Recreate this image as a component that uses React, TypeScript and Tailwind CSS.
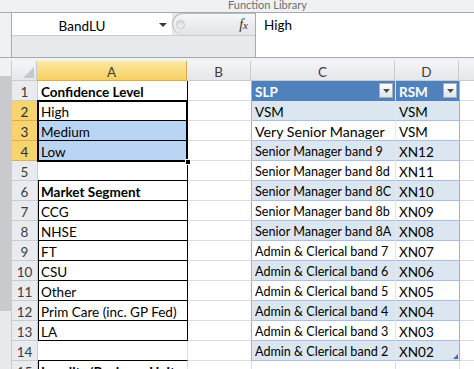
import React from 'react';

type Row = {
  n: number;
  a: string;
  aBold?: boolean;
  c?: string;
  d?: string;
};

const rows: Row[] = [
  { n: 1, a: 'Confidence Level', aBold: true, c: 'SLP', d: 'RSM' },
  { n: 2, a: 'High', c: 'VSM', d: 'VSM' },
  { n: 3, a: 'Medium', c: 'Very Senior Manager', d: 'VSM' },
  { n: 4, a: 'Low', c: 'Senior Manager band 9', d: 'XN12' },
  { n: 5, a: '', c: 'Senior Manager band 8d', d: 'XN11' },
  { n: 6, a: 'Market Segment', aBold: true, c: 'Senior Manager band 8C', d: 'XN10' },
  { n: 7, a: 'CCG', c: 'Senior Manager band 8b', d: 'XN09' },
  { n: 8, a: 'NHSE', c: 'Senior Manager band 8A', d: 'XN08' },
  { n: 9, a: 'FT', c: 'Admin & Clerical band 7', d: 'XN07' },
  { n: 10, a: 'CSU', c: 'Admin & Clerical band 6', d: 'XN06' },
  { n: 11, a: 'Other', c: 'Admin & Clerical band 5', d: 'XN05' },
  { n: 12, a: 'Prim Care (inc. GP Fed)', c: 'Admin & Clerical band 4', d: 'XN04' },
  { n: 13, a: 'LA', c: 'Admin & Clerical band 3', d: 'XN03' },
  { n: 14, a: '', c: 'Admin & Clerical band 2', d: 'XN02' },
  { n: 15, a: 'Locality/Business Unit', aBold: true },
];

const FilterButton = () => (
  <div className="w-[14px] h-[15px] mt-[2px] mr-[2px] shrink-0 border border-[#a9b0b9] bg-linear-to-b from-[#ffffff] to-[#dfe3e8] flex items-center justify-center">
    <svg width="7" height="4" viewBox="0 0 7 4">
      <polygon points="0,0 7,0 3.5,4" fill="#4d4d4d" />
    </svg>
  </div>
);

function SheetRow({ r }: { r: Row }) {
  const sel = r.n >= 2 && r.n <= 4;
  const inTable = r.n <= 14;
  const head = r.n === 1;
  const band = r.n >= 2 && r.n <= 14 && r.n % 2 === 0;
  const blackRight = r.n <= 13;
  const blackBottom = r.n <= 14;
  const blackLeft = (r.n >= 2 && r.n <= 4) || (r.n >= 6 && r.n <= 13) || r.n === 15;

  // column C mixes font sizes in the original sheet
  let cText = 'pt-[4px] leading-[14px] text-[12.6px]';
  if (head || r.n === 2) cText = 'pt-[4px] leading-[14px] text-[13.5px]';
  if (r.n === 3) cText = 'pt-[3px] leading-[15px] text-[14.2px]';

  return (
    <div className="flex h-[20px] shrink-0">
      <div
        className={`w-[26px] shrink-0 border-r border-b text-center pt-[4px] leading-[14px] text-[13.5px] ${
          sel ? 'bg-[#f8d46f] border-[#dcae4c] text-[#2e2e2e]' : 'bg-[#e9ebee] border-[#c8ccd1] text-[#3d3d3d]'
        }`}
      >
        {r.n}
      </div>
      <div
        className={`w-[150px] shrink-0 border-r border-b px-[3px] pt-[4px] leading-[14px] text-[13.5px] whitespace-nowrap overflow-hidden ${
          blackRight ? 'border-r-black' : 'border-r-[#dadcdd]'
        } ${blackBottom ? 'border-b-black' : 'border-b-[#dadcdd]'} ${blackLeft ? 'shadow-[inset_1px_0_0_#000]' : ''} ${
          sel && r.n > 2 ? 'bg-[#b9d5f3]' : 'bg-white'
        } ${r.aBold ? 'font-bold' : ''}`}
      >
        {r.a}
      </div>
      <div
        className={`w-[64px] shrink-0 border-r border-b border-b-[#dadcdd] bg-white ${
          inTable ? 'border-r-[#95b3d7]' : 'border-r-[#dadcdd]'
        }`}
      />
      {inTable ? (
        <>
          <div
            className={`w-[144px] shrink-0 border-r flex whitespace-nowrap overflow-hidden ${
              head
                ? 'bg-[#4f81bd] text-white font-bold border-r-[#dfe6ef] border-b border-b-[#4f81bd]'
                : `border-r-[#e3e9f1] border-b border-b-[#a9c0de] ${band ? 'bg-[#dce6f1]' : 'bg-white'}`
            }`}
          >
            <div className={`flex-1 pl-[3px] ${cText}`}>{r.c}</div>
            {head && <FilterButton />}
          </div>
          <div
            className={`w-[64px] shrink-0 border-r border-r-[#95b3d7] flex relative whitespace-nowrap overflow-hidden ${
              head
                ? 'bg-[#4f81bd] text-white font-bold border-b border-b-[#4f81bd]'
                : `border-b border-b-[#a9c0de] ${band ? 'bg-[#dce6f1]' : 'bg-white'}`
            }`}
          >
            <div className="flex-1 pl-[3px] pt-[4px] leading-[14px] text-[13.5px]">{r.d}</div>
            {head && <FilterButton />}
            {r.n === 14 && (
              <svg className="absolute right-[1px] bottom-[1px]" width="5" height="5" viewBox="0 0 5 5">
                <polygon points="5,0 5,5 0,5" fill="#3c6db0" />
              </svg>
            )}
          </div>
        </>
      ) : (
        <>
          <div className="w-[144px] shrink-0 border-r border-b border-[#dadcdd] bg-white" />
          <div className="w-[64px] shrink-0 border-r border-b border-[#dadcdd] bg-white" />
        </>
      )}
      <div className="flex-1 border-b border-[#dadcdd] bg-white" />
    </div>
  );
}

export default function App() {
  return (
    <div className="w-[474px] h-[369px] overflow-hidden bg-[#f0f1f3] text-black font-['Lato','Liberation_Sans',sans-serif] flex flex-col">
      {/* ribbon edge */}
      <div className="h-[13px] shrink-0 border-b border-[#a7abb0] overflow-hidden">
        <div className="pl-[228px] -mt-[1px] text-[11px] leading-[11px] text-[#6c6f73]">Function Library</div>
      </div>

      {/* name box + formula bar */}
      <div className="h-[45px] shrink-0 flex border-b border-[#a7abb0]">
        <div className="w-[11px] shrink-0" />
        <div className="w-[244px] shrink-0 border-l border-[#a7abb0] bg-[#e7e9ec] flex flex-col">
          <div className="h-[23px] flex border-b border-[#c9ccd0]">
            <div className="w-[160px] shrink-0 bg-white flex items-center">
              <div className="w-[140px] text-center text-[13.5px] leading-[14px] pt-[3px]">BandLU</div>
              <svg width="8" height="4" viewBox="0 0 8 4" className="ml-[7px] mt-[2px]">
                <polygon points="0,0 8,0 4,4" fill="#3a3a3a" />
              </svg>
            </div>
            <div className="flex-1 flex items-center rounded-l-[11px] border-l border-t border-[#b7babe] bg-linear-to-b from-[#f6f7f8] to-[#e2e4e7]">
              <div className="w-[9px] h-[9px] ml-[3px] rounded-full bg-linear-to-b from-[#d6d8db] to-[#f5f6f7] border border-[#c4c7cb]" />
              <div className="flex-1" />
              <div className="mr-[7px] text-[14px] leading-[14px] italic font-['Liberation_Serif',serif] text-[#333]">
                f<span className="text-[11px]">x</span>
              </div>
            </div>
          </div>
          <div className="flex-1" />
        </div>
        <div className="flex-1 bg-white border-l border-[#a7abb0] pl-[8px] pt-[5px] text-[13.5px] leading-[14px]">High</div>
      </div>

      <div className="h-[3px] shrink-0" />

      {/* sheet */}
      <div className="flex-1 flex overflow-hidden">
        <div className="w-[11px] shrink-0 flex flex-col">
          <div className="h-[15px] shrink-0" />
          <div className="h-[235px] shrink-0 bg-[#c9cacd]" />
          <div className="flex-1 bg-[#e8e9eb]" />
        </div>
        <div className="flex-1 flex flex-col relative border-l border-[#c8ccd1]">
          {/* column headers */}
          <div className="flex h-[20px] shrink-0 text-[13.5px] leading-[14px] text-[#3d3d3d]">
            <div className="w-[25px] shrink-0 border-r border-b border-[#c8ccd1] bg-linear-to-b from-[#f4f5f7] to-[#e4e7eb] flex items-end justify-end">
              <svg width="11" height="11" viewBox="0 0 11 11" className="mr-[2px] mb-[2px]">
                <polygon points="11,0 11,11 0,11" fill="#c4c7cb" />
              </svg>
            </div>
            <div className="w-[150px] shrink-0 border-r border-b border-[#d9ad4a] bg-linear-to-b from-[#fde9a0] to-[#f7d062] text-center pt-[4px]">A</div>
            <div className="w-[64px] shrink-0 border-r border-b border-[#c8ccd1] bg-linear-to-b from-[#f4f5f7] to-[#e4e7eb] text-center pt-[4px]">B</div>
            <div className="w-[144px] shrink-0 border-r border-b border-[#c8ccd1] bg-linear-to-b from-[#f4f5f7] to-[#e4e7eb] text-center pt-[4px]">C</div>
            <div className="w-[64px] shrink-0 border-r border-b border-[#c8ccd1] bg-linear-to-b from-[#f4f5f7] to-[#e4e7eb] text-center pt-[4px]">D</div>
            <div className="flex-1 border-b border-[#c8ccd1] bg-linear-to-b from-[#f4f5f7] to-[#e4e7eb]" />
          </div>

          {rows.map((r) => (
            <SheetRow key={r.n} r={r} />
          ))}

          {/* selection A2:A4 */}
          <div className="absolute left-[25px] top-[39px] w-[151px] h-[62px] border-2 border-black pointer-events-none" />
          <div className="absolute left-[173px] top-[98px] w-[6px] h-[6px] bg-black border border-white" />
        </div>
      </div>
    </div>
  );
}
